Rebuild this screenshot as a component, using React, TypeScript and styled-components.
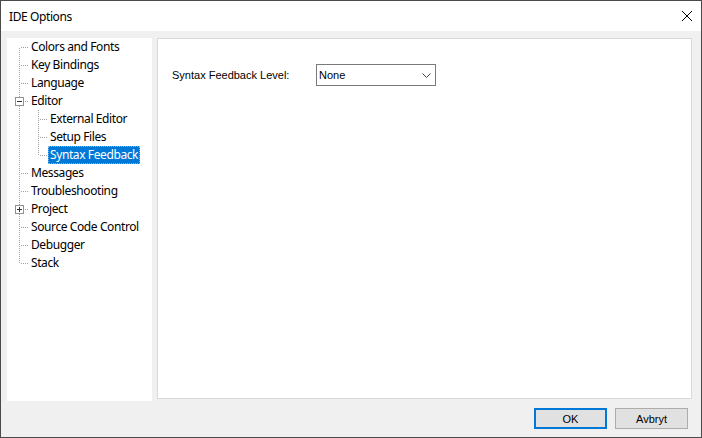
import React from "react";
import styled, { createGlobalStyle } from "styled-components";

const GlobalStyle = createGlobalStyle`
  html, body {
    margin: 0;
    padding: 0;
    background: #f0f0f0;
  }
  * {
    box-sizing: border-box;
  }
`;

type TreeItem = {
  label: string;
  level: number;
  expander?: "open" | "closed";
  selected?: boolean;
};

const items: TreeItem[] = [
  { label: "Colors and Fonts", level: 0 },
  { label: "Key Bindings", level: 0 },
  { label: "Language", level: 0 },
  { label: "Editor", level: 0, expander: "open" },
  { label: "External Editor", level: 1 },
  { label: "Setup Files", level: 1 },
  { label: "Syntax Feedback", level: 1, selected: true },
  { label: "Messages", level: 0 },
  { label: "Troubleshooting", level: 0 },
  { label: "Project", level: 0, expander: "closed" },
  { label: "Source Code Control", level: 0 },
  { label: "Debugger", level: 0 },
  { label: "Stack", level: 0 },
];

const DOT = "#a0a0a0";

// does an item at this level follow later on, before the parent ends?
const hasNextSibling = (idx: number) => {
  const lvl = items[idx].level;
  for (let i = idx + 1; i < items.length; i++) {
    if (items[i].level < lvl) return false;
    if (items[i].level === lvl) return true;
  }
  return false;
};

const ancestorContinues = (idx: number, lvl: number) => {
  for (let i = idx - 1; i >= 0; i--) {
    if (items[i].level === lvl) return hasNextSibling(i);
  }
  return false;
};

const Guide: React.FC<{
  top?: boolean;
  bottom?: boolean;
  branch?: boolean;
  expander?: "open" | "closed";
}> = ({ top, bottom, branch, expander }) => (
  <GuideCell width="19" height="18" shapeRendering="crispEdges">
    {top && (
      <line x1="9.5" y1="0" x2="9.5" y2="9" stroke={DOT} strokeDasharray="1 1" />
    )}
    {bottom && (
      <line x1="9.5" y1="10" x2="9.5" y2="18" stroke={DOT} strokeDasharray="1 1" />
    )}
    {branch && (
      <line x1="11" y1="9.5" x2="19" y2="9.5" stroke={DOT} strokeDasharray="1 1" />
    )}
    {expander && (
      <>
        <rect x="5.5" y="5.5" width="8" height="8" fill="#fff" stroke="#919191" />
        <line x1="7" y1="9.5" x2="12" y2="9.5" stroke="#333" />
        {expander === "closed" && (
          <line x1="9.5" y1="7" x2="9.5" y2="12" stroke="#333" />
        )}
      </>
    )}
  </GuideCell>
);

const Tree: React.FC = () => (
  <TreePanel>
    {items.map((item, idx) => {
      const guides = [];
      for (let l = 0; l < item.level; l++) {
        const cont = ancestorContinues(idx, l);
        guides.push(<Guide key={l} top={cont} bottom={cont} />);
      }
      guides.push(
        <Guide
          key="own"
          top={idx !== 0}
          bottom={hasNextSibling(idx)}
          branch
          expander={item.expander}
        />
      );
      return (
        <TreeRow key={item.label}>
          {guides}
          <TreeLabel $selected={item.selected}>{item.label}</TreeLabel>
        </TreeRow>
      );
    })}
  </TreePanel>
);

const App: React.FC = () => {
  return (
    <>
      <GlobalStyle />
      <Window>
        <TitleBar>
          <Title>IDE Options</Title>
          <CloseButton>
            <svg width="10" height="10" viewBox="0 0 10 10">
              <path d="M0 0 L10 10 M10 0 L0 10" stroke="#000" strokeWidth="1" />
            </svg>
          </CloseButton>
        </TitleBar>
        <Body>
          <Main>
            <Tree />
            <ContentPanel>
              <FieldRow>
                <FieldLabel>Syntax Feedback Level:</FieldLabel>
                <Combo>
                  <span>None</span>
                  <svg width="9" height="5" viewBox="0 0 9 5">
                    <path d="M0.5 0.5 L4.5 4.5 L8.5 0.5" fill="none" stroke="#444" />
                  </svg>
                </Combo>
              </FieldRow>
            </ContentPanel>
          </Main>
          <Footer>
            <DialogButton $default>OK</DialogButton>
            <DialogButton>Avbryt</DialogButton>
          </Footer>
        </Body>
      </Window>
    </>
  );
};

export default App;

const Window = styled.div`
  width: 702px;
  height: 438px;
  border: 1px solid #4a4a4a;
  background: #f0f0f0;
  display: flex;
  flex-direction: column;
  font-family: "Noto Sans", sans-serif;
  font-size: 12px;
  letter-spacing: -0.4px;
  color: #000;
`;

const TitleBar = styled.div`
  height: 30px;
  background: #fff;
  display: flex;
  align-items: center;
  justify-content: space-between;
  padding: 0 9px 0 8px;
`;

const Title = styled.div`
  font-size: 12px;
`;

const CloseButton = styled.div`
  width: 10px;
  height: 10px;
  display: flex;

  svg {
    display: block;
  }
`;

const Body = styled.div`
  flex: 1;
  display: flex;
  flex-direction: column;
  padding: 7px 9px 8px 6px;
`;

const Main = styled.div`
  display: flex;
  gap: 5px;
  height: 363px;
`;

const TreePanel = styled.div`
  width: 145px;
  background: #fff;
  padding-left: 3px;
  display: flex;
  flex-direction: column;
`;

const TreeRow = styled.div`
  display: flex;
  height: 18px;
  align-items: center;
`;

const GuideCell = styled.svg`
  display: block;
  flex: none;
`;

const TreeLabel = styled.div<{ $selected?: boolean }>`
  height: 18px;
  line-height: 18px;
  padding: 0 2px;
  white-space: nowrap;
  background: ${(p) => (p.$selected ? "#0078d7" : "transparent")};
  color: ${(p) => (p.$selected ? "#fff" : "#000")};
  outline: ${(p) => (p.$selected ? "1px dotted #7fb8ea" : "none")};
  outline-offset: -1px;
`;

const ContentPanel = styled.div`
  flex: 1;
  height: 361px;
  background: #fff;
  border: 1px solid #d9d9d9;
  padding: 25px 14px;
`;

const FieldRow = styled.div`
  display: flex;
  align-items: center;
`;

const FieldLabel = styled.div`
  width: 144px;
  font-family: "Liberation Sans", Arial, sans-serif;
  font-size: 11px;
  letter-spacing: 0;
`;

const Combo = styled.div`
  width: 120px;
  height: 22px;
  border: 1px solid #7a7a7a;
  background: #fff;
  display: flex;
  align-items: center;
  justify-content: space-between;
  padding: 0 4px 0 2px;
  font-family: "Liberation Sans", Arial, sans-serif;
  font-size: 11px;
  letter-spacing: 0;
`;

const Footer = styled.div`
  display: flex;
  justify-content: flex-end;
  gap: 8px;
  margin-top: 7px;
  padding-right: 4px;
`;

const DialogButton = styled.div<{ $default?: boolean }>`
  width: 73px;
  height: 21px;
  display: flex;
  align-items: center;
  justify-content: center;
  background: #e1e1e1;
  border: ${(p) => (p.$default ? "2px solid #0078d7" : "1px solid #adadad")};
  font-family: "Liberation Sans", Arial, sans-serif;
  font-size: 11px;
  letter-spacing: 0;
`;
